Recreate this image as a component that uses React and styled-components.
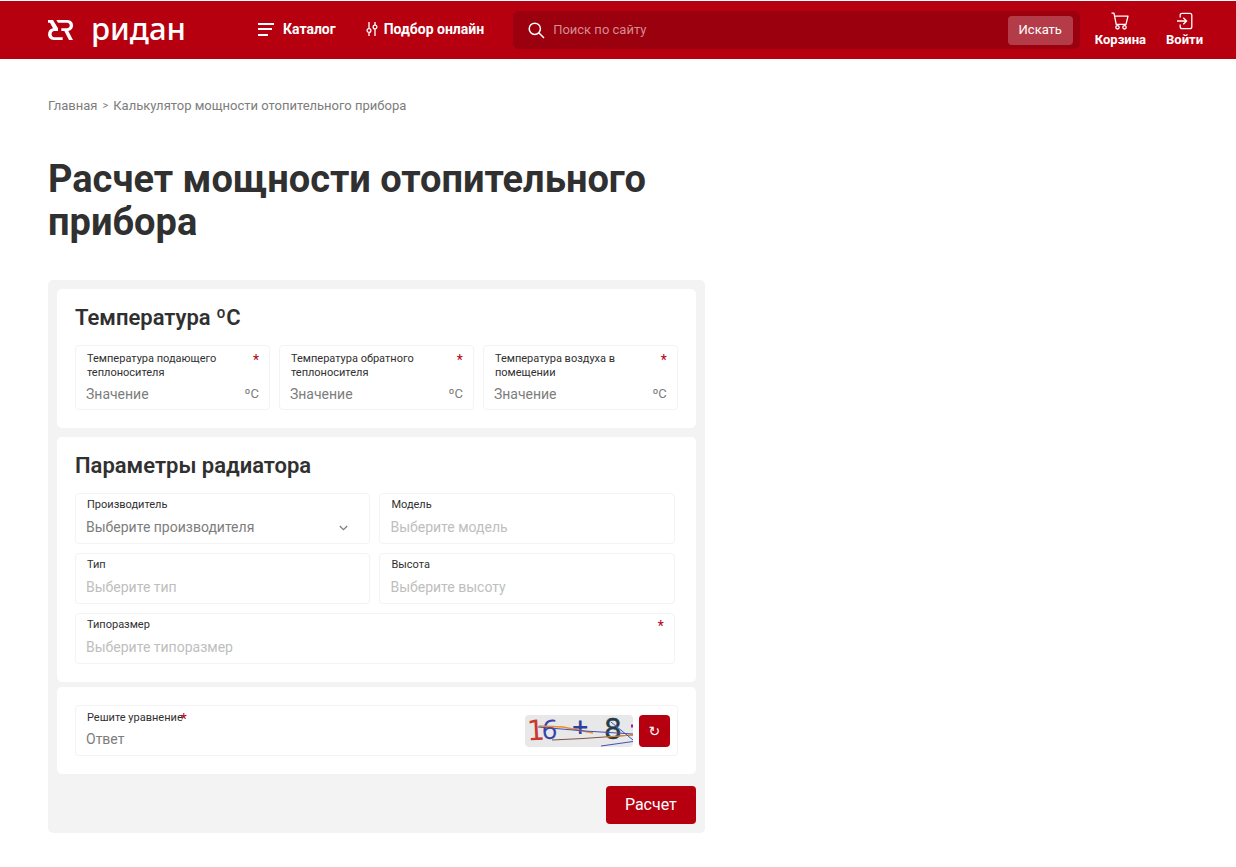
import { useState } from 'react';
import styled, { createGlobalStyle, css } from 'styled-components';

const GlobalStyle = createGlobalStyle`
  *, *::before, *::after {
    box-sizing: border-box;
  }
  body {
    margin: 0;
    background: #fff;
    color: #303030;
    font-family: Roboto, "Liberation Sans", sans-serif;
  }
  button, input, select {
    font-family: inherit;
    margin: 0;
  }
  a {
    color: inherit;
    text-decoration: none;
  }
`

const Page = styled.div`
  padding-top: 1px;
`

const Header = styled.header`
  display: flex;
  align-items: center;
  height: 58px;
  padding: 0 33px 0 48px;
  background: #b6000f;
  color: #fff;
`

const Logo = styled.a`
  display: flex;
  align-items: center;
  gap: 17px;
  margin-right: 72px;
`

const Wordmark = styled.span`
  padding-bottom: 4px;
  font: 500 31px/36px "Noto Sans", sans-serif;
`

const Nav = styled.nav`
  display: flex;
  gap: 30px;
  margin-right: 29px;
`

const NavLink = styled.a`
  display: flex;
  align-items: center;
  gap: ${({ $gap }) => $gap}px;
  padding-bottom: 2px;
  font-size: 14px;
  line-height: 20px;
  font-weight: 700;
  white-space: nowrap;
`

const Search = styled.form`
  flex: 1;
  min-width: 0;
  display: flex;
  align-items: center;
  gap: 8px;
  height: 38px;
  padding: 0 7px 0 15px;
  border-radius: 6px;
  background: #9a000d;
`

const SearchInput = styled.input`
  flex: 1;
  min-width: 0;
  padding: 0;
  border: 0;
  outline: 0;
  background: none;
  color: #fff;
  font-size: 13px;
  line-height: 20px;
  &::placeholder {
    color: #d38d93;
    opacity: 1;
  }
`

const SearchButton = styled.button`
  width: 65px;
  height: 29px;
  padding: 0 0 2px;
  border: 0;
  border-radius: 4px;
  background: #b43c48;
  color: #fff;
  font-size: 13px;
  font-weight: 400;
  cursor: pointer;
`

const UserLinks = styled.div`
  display: flex;
  gap: 20px;
  margin-left: 15px;
`

const UserLink = styled.a`
  display: flex;
  flex-direction: column;
  align-items: center;
  font-size: 13px;
  line-height: 16px;
  font-weight: 700;
  svg {
    margin-bottom: 2px;
  }
`

const Main = styled.main`
  padding: 37px 48px 34px;
`

const Breadcrumbs = styled.nav`
  display: flex;
  gap: 5px;
  color: #7d7d7d;
  font-size: 13px;
  line-height: 20px;
`

const Separator = styled.span`
  font-size: 11px;
`

const Columns = styled.div`
  display: grid;
  grid-template-columns: 7fr 5fr;
  gap: 14px;
`

const Title = styled.h1`
  margin: 42px 0 36px;
  font-size: 38px;
  line-height: 43px;
  font-weight: 700;
`

const Panel = styled.form`
  display: flex;
  flex-direction: column;
  padding: 9px;
  border-radius: 5px;
  background: #f3f3f3;
`

const Card = styled.section`
  margin-bottom: ${({ $gap }) => $gap}px;
  padding: 18px;
  border-radius: 5px;
  background: #fff;
`

const CardTitle = styled.h2`
  margin: -3px 0 13px;
  font-size: 22px;
  line-height: 28px;
  font-weight: 600;
`

const Fields = styled.div`
  display: grid;
  grid-template-columns: repeat(${({ $columns }) => $columns}, minmax(0, 1fr));
  gap: 9px;
  padding-right: ${({ $inset }) => ($inset ? 3 : 0)}px;
`

const FieldBox = styled.div`
  display: flex;
  flex-direction: column;
  justify-content: space-between;
  min-width: 0;
  min-height: 51px;
  padding: 4px 10px 5px 10px;
  border: 1px solid #f3f3f3;
  border-radius: 4px;
  ${({ $wide }) => $wide && css`
    grid-column: 1 / -1;
  `}
  ${({ $tall }) => $tall && css`
    min-height: 65px;
    padding: 6px 10px 4px 10px;
  `}
`

const FieldTop = styled.div`
  display: flex;
  justify-content: space-between;
  padding-left: 1px;
`

const Label = styled.label`
  max-width: 145px;
  font-size: 11px;
  line-height: 14px;
`

const Star = styled.span`
  height: 14px;
  color: #b6000f;
  font-size: 14px;
  line-height: 16px;
`

const FieldRow = styled.div`
  display: flex;
  align-items: center;
`

const control = css`
  flex: 1;
  min-width: 0;
  height: 22px;
  padding: 0;
  border: 0;
  outline: 0;
  background: none;
  font-size: 14px;
  line-height: 20px;
`

const Input = styled.input`
  ${control}
  color: #303030;
  &::placeholder {
    color: #7d7d7d;
    opacity: 1;
  }
`

const Select = styled.select`
  ${control}
  appearance: none;
  color: #7d7d7d;
  &:disabled {
    color: #bebebe;
    opacity: 1;
  }
`

const Unit = styled.span`
  color: #7d7d7d;
  font-size: 13px;
  line-height: 20px;
`

const ChevronSlot = styled.span`
  display: flex;
  padding: 2px 11px 0 0;
`

const CaptchaBox = styled.div`
  display: flex;
  align-items: center;
  gap: 6px;
  min-height: 51px;
  padding: 0 7px 0 10px;
  border: 1px solid #f3f3f3;
  border-radius: 4px;
`

const CaptchaField = styled.div`
  flex: 1;
  display: flex;
  flex-direction: column;
  gap: 3px;
`

const CaptchaTop = styled.div`
  display: flex;
  padding-left: 1px;
  ${Star} {
    margin-left: -2px;
  }
`

const RefreshButton = styled.button`
  width: 31px;
  height: 32px;
  padding: 0;
  border: 0;
  border-radius: 4px;
  background: #b6000f;
  color: #fff;
  font: 14px "DejaVu Sans", sans-serif;
  cursor: pointer;
`

const SubmitButton = styled.button`
  align-self: flex-end;
  width: 90px;
  height: 38px;
  padding: 0 0 2px;
  border: 0;
  border-radius: 4px;
  background: #b6000f;
  color: #fff;
  font-size: 16px;
  font-weight: 400;
  cursor: pointer;
`

const LogoMark = () => (
  <svg width="26" height="20" viewBox="54 57 78 60" fill="#fff">
    <path d="M54 57H69L84 82V90H73C62 91 62 108 73 109H98V117H71C49 116 49 85 69 82L60 65H54Z" />
    <path d="M79 57H112C134 58 135 86 115 90L129 117H117L103 90H94V82H111C122 81 122 66 111 65H84Z" />
  </svg>
)

const MenuIcon = () => (
  <svg width="16" height="13" viewBox="0 0 16 13" fill="#fff">
    <path d="M0 0H16V2H0zM0 5H14V7H0zM0 11H10V13H0z" />
  </svg>
)

const TuneIcon = () => (
  <svg width="12" height="14" viewBox="0 0 12 14" fill="none" stroke="#fff" strokeWidth="1.3">
    <path d="M3 0V6M3 11V14M9 0V3M9 7V14" />
    <circle cx="3" cy="8.5" r="1.9" />
    <circle cx="9" cy="5" r="1.9" />
  </svg>
)

const SearchIcon = () => (
  <svg width="17" height="17" viewBox="0 0 17 17" fill="none" stroke="#fff" strokeWidth="1.5">
    <circle cx="6.8" cy="6.8" r="5.6" />
    <path d="M10.8 10.8L16 16" />
  </svg>
)

const CartIcon = () => (
  <svg width="18" height="18" viewBox="0 0 18 18" fill="none" stroke="#fff" strokeWidth="1.3" strokeLinejoin="round">
    <path d="M0.5 1.2H3L5.2 12.3H15L17 4.2H3.6" />
    <circle cx="6.5" cy="15.3" r="1.7" />
    <circle cx="13.5" cy="15.3" r="1.7" />
  </svg>
)

const LoginIcon = () => (
  <svg width="18" height="18" viewBox="0 0 18 18" fill="none" stroke="#fff" strokeWidth="1.3">
    <path d="M4.2 5.5V3.3Q4.2 1.3 6.2 1.3H13.8Q15.8 1.3 15.8 3.3V14.7Q15.8 16.7 13.8 16.7H6.2Q4.2 16.7 4.2 14.7V12.5" />
    <path d="M1 9H10.5M7.3 5.8L10.6 9L7.3 12.2" />
  </svg>
)

const Chevron = () => (
  <svg width="9" height="6" viewBox="0 0 9 6" fill="none" stroke="#7d7d7d" strokeWidth="1.3">
    <path d="M0.8 1L4.5 4.6L8.2 1" />
  </svg>
)

const CaptchaImage = () => (
  <svg width="108" height="32" viewBox="0 0 108 32" role="img" aria-label="16 + 8">
    <defs>
      <clipPath id="captcha">
        <rect width="108" height="32" rx="4" />
      </clipPath>
    </defs>
    <g clipPath="url(#captcha)" fontFamily="DejaVu Sans, sans-serif">
      <rect width="108" height="32" fill="#e8e8e8" />
      <text x="2" y="25" fontSize="28" fill="#c9392c" transform="rotate(-3 10 16)">1</text>
      <text x="17" y="24" fontSize="27" fill="#3a44a8" fontFamily="Noto Sans, sans-serif" transform="rotate(3 25 14)">6</text>
      <text x="46" y="19" fontSize="22" fontWeight="700" fill="#2e3f9e">+</text>
      <text x="79" y="24" fontSize="28" fill="#263c4a" stroke="#263c4a" strokeWidth="0.4">8</text>
      <path d="M106 11H108" stroke="#8e24aa" strokeWidth="3" />
      <g fill="none" strokeWidth="1">
        <path d="M14 11L38 12L68 18" stroke="#f08c28" strokeWidth="1.4" />
        <path d="M13 12L60 16L108 19" stroke="#3f51b5" />
        <path d="M27 25L58 23.500L108 20" stroke="#795548" />
        <path d="M82 22L108 20" stroke="#f08c28" />
        <path d="M86 7L108 25" stroke="#3f51b5" />
        <path d="M76 31L108 26.500" stroke="#3f51b5" />
      </g>
    </g>
  </svg>
)

const temperatures = [
  { id: 'supply', label: 'Температура подающего теплоносителя' },
  { id: 'return', label: 'Температура обратного теплоносителя' },
  { id: 'room', label: 'Температура воздуха в помещении' },
]

const radiatorFields = [
  { id: 'maker', label: 'Производитель', text: 'Выберите производителя', enabled: true },
  { id: 'model', label: 'Модель', text: 'Выберите модель' },
  { id: 'type', label: 'Тип', text: 'Выберите тип' },
  { id: 'height', label: 'Высота', text: 'Выберите высоту' },
  { id: 'size', label: 'Типоразмер', text: 'Выберите типоразмер', wide: true, required: true },
]

const TemperatureField = ({ id, label }) => {
  const [value, setValue] = useState('')

  return (
    <FieldBox $tall>
      <FieldTop>
        <Label htmlFor={id}>{label}</Label>
        <Star>*</Star>
      </FieldTop>
      <FieldRow>
        <Input id={id} placeholder="Значение" value={value} onChange={(e) => setValue(e.target.value)} />
        <Unit>ºC</Unit>
      </FieldRow>
    </FieldBox>
  )
}

const SelectField = ({ id, label, text, enabled, wide, required }) => (
  <FieldBox $wide={wide}>
    <FieldTop>
      <Label htmlFor={id}>{label}</Label>
      {required && <Star>*</Star>}
    </FieldTop>
    <FieldRow>
      <Select id={id} disabled={!enabled}>
        <option>{text}</option>
      </Select>
      {enabled && <ChevronSlot><Chevron /></ChevronSlot>}
    </FieldRow>
  </FieldBox>
)

const SiteHeader = () => (
  <Header>
    <Logo href="#">
      <LogoMark />
      <Wordmark>ридан</Wordmark>
    </Logo>
    <Nav>
      <NavLink href="#" $gap={9}><MenuIcon />Каталог</NavLink>
      <NavLink href="#" $gap={6}><TuneIcon />Подбор онлайн</NavLink>
    </Nav>
    <Search onSubmit={(e) => e.preventDefault()}>
      <SearchIcon />
      <SearchInput placeholder="Поиск по сайту" aria-label="Поиск по сайту" />
      <SearchButton>Искать</SearchButton>
    </Search>
    <UserLinks>
      <UserLink href="#"><CartIcon />Корзина</UserLink>
      <UserLink href="#"><LoginIcon />Войти</UserLink>
    </UserLinks>
  </Header>
)

const App = () => {
  const [answer, setAnswer] = useState('')

  return (
    <Page>
      <GlobalStyle />
      <SiteHeader />
      <Main>
        <Breadcrumbs>
          <a href="#">Главная</a>
          <Separator>&gt;</Separator>
          <span>Калькулятор мощности отопительного прибора</span>
        </Breadcrumbs>
        <Columns>
          <div>
            <Title>Расчет мощности отопительного прибора</Title>
            <Panel onSubmit={(e) => e.preventDefault()}>
              <Card $gap={9}>
                <CardTitle>Температура ºC</CardTitle>
                <Fields $columns={3}>
                  {temperatures.map((t) => <TemperatureField key={t.id} {...t} />)}
                </Fields>
              </Card>
              <Card $gap={5}>
                <CardTitle>Параметры радиатора</CardTitle>
                <Fields $columns={2} $inset>
                  {radiatorFields.map((f) => <SelectField key={f.id} {...f} />)}
                </Fields>
              </Card>
              <Card $gap={12}>
                <CaptchaBox>
                  <CaptchaField>
                    <CaptchaTop>
                      <Label htmlFor="answer">Решите уравнение</Label>
                      <Star>*</Star>
                    </CaptchaTop>
                    <FieldRow>
                      <Input id="answer" placeholder="Ответ" value={answer} onChange={(e) => setAnswer(e.target.value)} />
                    </FieldRow>
                  </CaptchaField>
                  <CaptchaImage />
                  <RefreshButton type="button" aria-label="Обновить">↻</RefreshButton>
                </CaptchaBox>
              </Card>
              <SubmitButton>Расчет</SubmitButton>
            </Panel>
          </div>
        </Columns>
      </Main>
    </Page>
  )
}

export default App;
